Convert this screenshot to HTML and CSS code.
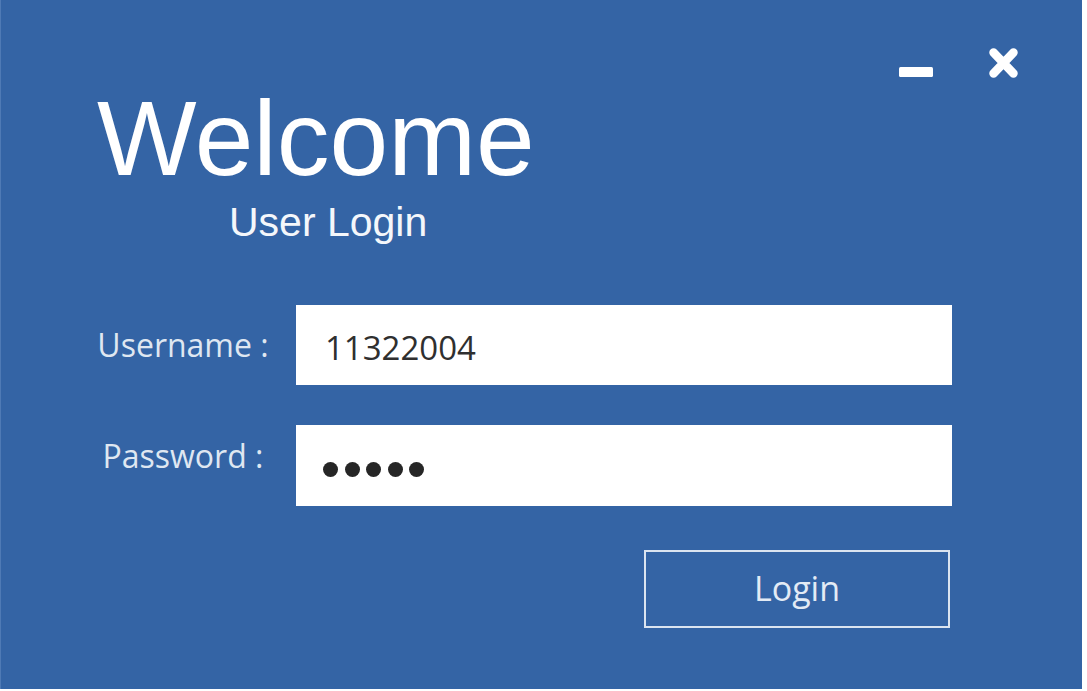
FILE: index.html
```html
<!DOCTYPE html>
<html lang="en">
<head>
<meta charset="utf-8">
<title>Welcome - User Login</title>
<link rel="stylesheet" href="styles.css">
</head>
<body>
<div class="window">
  <div class="controls">
    <button class="ctrl ctrl-min" aria-label="Minimize">
      <svg width="34" height="10" viewBox="0 0 34 10"><rect x="0" y="0" width="34" height="10" rx="1.5" fill="#fff"/></svg>
    </button>
    <button class="ctrl ctrl-close" aria-label="Close">
      <svg width="29" height="30" viewBox="0 0 29 30"><path d="M4.5 4.5 L24.5 25.5 M24.5 4.5 L4.5 25.5" stroke="#fff" stroke-width="8.5" stroke-linecap="round" fill="none"/></svg>
    </button>
  </div>
  <h1 class="title">Welcome</h1>
  <p class="subtitle">User Login</p>
  <form class="form">
    <label class="label label-user">Username :</label>
    <div class="field field-user">11322004</div>
    <label class="label label-pass">Password :</label>
    <div class="field field-pass"><span class="dot"></span><span class="dot"></span><span class="dot"></span><span class="dot"></span><span class="dot"></span></div>
    <div class="actions"><button type="button" class="login">Login</button></div>
  </form>
</div>
</body>
</html>
```
FILE: styles.css
```css
html, body {
  margin: 0;
  padding: 0;
  background: #ffffff;
}
.window {
  width: 1081px;
  height: 689px;
  background: #3464a5;
  border-left: 1px solid #4f7ab5;
  box-sizing: content-box;
  overflow: hidden;
  font-family: "Open Sans", "Noto Sans", sans-serif;
}
.controls {
  display: flex;
  justify-content: flex-end;
  align-items: flex-end;
  gap: 56px;
  padding: 48px 64px 0 0;
  height: 30px;
}
.ctrl {
  background: none;
  border: 0;
  padding: 0;
  margin: 0;
  display: block;
  line-height: 0;
}
.ctrl-min {
  margin-bottom: 1px;
}
.title {
  margin: 8px 0 0 96px;
  font-family: "Liberation Sans", Arial, sans-serif;
  font-weight: 400;
  font-size: 105.5px;
  line-height: 105px;
  color: #ffffff;
}
.subtitle {
  margin: 11px 0 0 228px;
  font-family: "Liberation Sans", Arial, sans-serif;
  font-size: 41px;
  line-height: 41px;
  color: #f4f7fb;
}
.form {
  display: grid;
  grid-template-columns: 200px 656px;
  grid-template-rows: 80px 81px auto;
  column-gap: 13px;
  row-gap: 40px;
  margin: 62px 0 0 82px;
}
.label {
  font-size: 32px;
  color: #dfe7f1;
  text-align: center;
  line-height: 44px;
  align-self: center;
}
.label-pass {
  align-self: start;
  margin-top: 9px;
}
.field {
  background: #ffffff;
  display: flex;
  align-items: center;
  padding: 0 0 0 29px;
  box-sizing: border-box;
  font-size: 33px;
  color: #2f2f2f;
}
.field-user {
  padding-top: 4px;
}
.field-pass {
  gap: 6.5px;
  padding-top: 8px;
  padding-left: 27px;
}
.dot {
  width: 15px;
  height: 15px;
  border-radius: 50%;
  background: #262626;
}
.actions {
  grid-column: 2;
  display: flex;
  justify-content: flex-end;
  padding-right: 2px;
  margin-top: 4px;
}
.login {
  width: 306px;
  height: 78px;
  background: transparent;
  border: 2px solid #dbe4f0;
  color: #e3ebf5;
  font-family: "Open Sans", "Noto Sans", sans-serif;
  font-size: 34px;
  padding: 0 0 2px 0;
  box-sizing: border-box;
}
```
